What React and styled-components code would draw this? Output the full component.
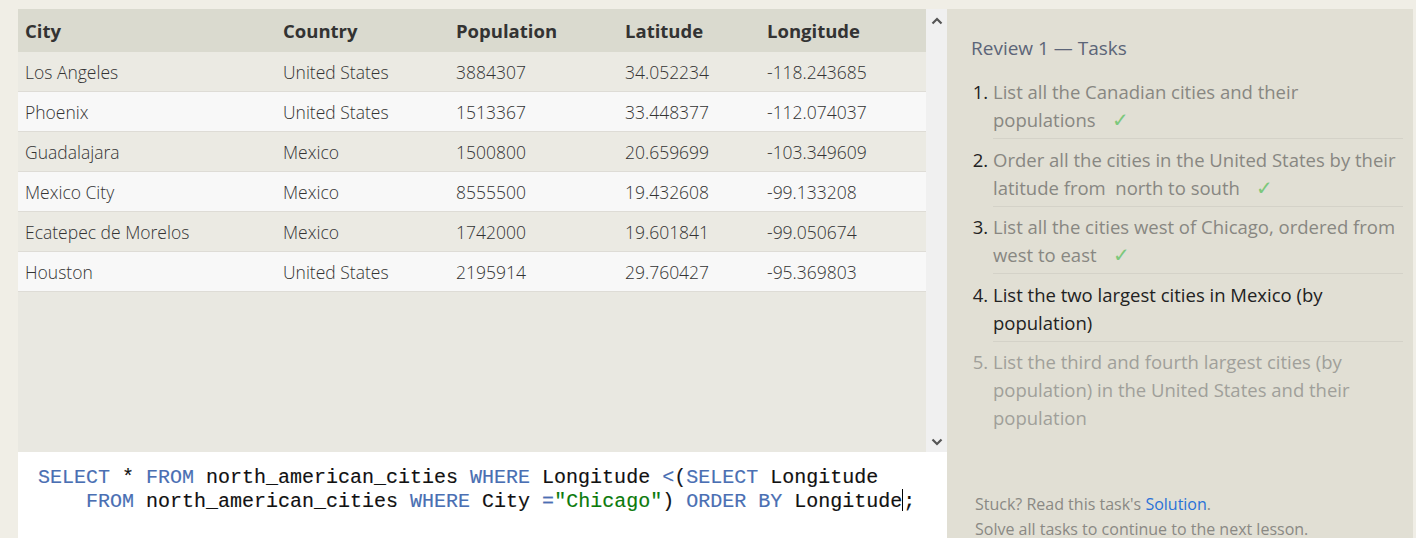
import React from 'react'
import styled, { createGlobalStyle } from 'styled-components'

const GlobalStyle = createGlobalStyle`
    html, body {
        margin: 0;
        padding: 0;
        background: #f0eee6;
        overflow: hidden;
    }
`

const Page = styled.div`
    display: flex;
    height: 538px;
    padding: 9px 3px 0 18px;
    box-sizing: border-box;
    font-family: 'Open Sans', 'Liberation Sans', sans-serif;
`

const LeftPane = styled.div`
    width: 929px;
    display: flex;
    flex-direction: column;
`

const ResultArea = styled.div`
    display: flex;
    height: 443px;
    background: #e9e8e1;
`

const TableWrap = styled.div`
    flex: 1;
`

const Table = styled.table`
    width: 100%;
    table-layout: fixed;
    border-collapse: collapse;
    color: #333;
    font-size: 17.5px;
`

const HeadCell = styled.th`
    text-align: left;
    font-weight: 700;
    font-size: 18.5px;
    height: 43px;
    padding: 0 7px;
    background: #dadacf;
    width: ${p => p.w}px;
    box-sizing: border-box;
`

const Row = styled.tr`
    background: ${p => (p.even ? '#f8f8f8' : '#ebeae3')};
    border-bottom: 1px solid #dedcd6;
`

const Cell = styled.td`
    height: 39px;
    padding: 0 7px;
    font-weight: 300;
    white-space: nowrap;
`

const Scrollbar = styled.div`
    width: 21px;
    background: #f0f0f0;
    display: flex;
    flex-direction: column;
    justify-content: space-between;
    align-items: center;
    padding: 8px 0 6px;
    box-sizing: border-box;
`

const Editor = styled.div`
    flex: 1;
    background: #fff;
    padding: 14px 20px 10px;
    font-family: 'Liberation Mono', 'DejaVu Sans Mono', monospace;
    font-size: 20px;
    line-height: 24px;
    color: #111;
    white-space: pre;
    -webkit-text-stroke: 0.15px currentColor;
`

const Kw = styled.span`
    color: #4a6fb3;
`

const Str = styled.span`
    color: #0b7a0b;
`

const Caret = styled.span`
    display: inline-block;
    width: 0;
    height: 22px;
    border-left: 1.5px solid #000;
    vertical-align: middle;
    margin-top: -3px;
`

const RightPane = styled.div`
    flex: 1;
    background: #e1dfd4;
    padding: 24px 10px 0 24px;
    display: flex;
    flex-direction: column;
`

const Title = styled.div`
    font-size: 19px;
    color: #5c6578;
    margin: 2px 0 15px;
`

const TaskList = styled.ol`
    margin: 0;
    padding-left: 22px;
    font-size: 18.5px;
    line-height: 28px;
`

const Task = styled.li`
    padding: 2px 0 4px;
    border-bottom: ${p => (p.last ? 'none' : '1px solid #d4d2c8')};
    margin-bottom: 4.5px;
    color: ${p => (p.state === 'done' ? '#888782' : p.state === 'current' ? '#222' : '#a09f9a')};
    &::marker {
        color: ${p => (p.state === 'future' ? '#a09f9a' : '#222')};
    }
`

const Check = styled.span`
    color: #7cc87c;
    margin-left: 16px;
    font-family: 'DejaVu Sans', sans-serif;
    font-size: 20px;
    font-weight: 300;
    line-height: 1;
`

const Footer = styled.div`
    margin-top: auto;
    padding-left: 4px;
    font-size: 16px;
    line-height: 25px;
    color: #8a8984;
    margin-bottom: -4px;
`

const Link = styled.span`
    color: #2a72d8;
`

const Chevron = ({ up }) => (
    <svg width="12" height="8" viewBox="0 0 12 8">
        <path d={up ? 'M1.5 6.5 L6 2 L10.5 6.5' : 'M1.5 1.5 L6 6 L10.5 1.5'} fill="none" stroke="#555" strokeWidth="2.2" />
    </svg>
)

const columns = [
    { name: 'City', w: 258 },
    { name: 'Country', w: 173 },
    { name: 'Population', w: 169 },
    { name: 'Latitude', w: 142 },
    { name: 'Longitude', w: 166 },
]

const rows = [
    ['Los Angeles', 'United States', '3884307', '34.052234', '-118.243685'],
    ['Phoenix', 'United States', '1513367', '33.448377', '-112.074037'],
    ['Guadalajara', 'Mexico', '1500800', '20.659699', '-103.349609'],
    ['Mexico City', 'Mexico', '8555500', '19.432608', '-99.133208'],
    ['Ecatepec de Morelos', 'Mexico', '1742000', '19.601841', '-99.050674'],
    ['Houston', 'United States', '2195914', '29.760427', '-95.369803'],
]

const tasks = [
    { text: 'List all the Canadian cities and their populations', state: 'done' },
    { text: 'Order all the cities in the United States by their latitude from\u00a0 north to south', state: 'done' },
    { text: 'List all the cities west of Chicago, ordered from west to east', state: 'done' },
    { text: 'List the two largest cities in Mexico (by population)', state: 'current' },
    { text: 'List the third and fourth largest cities (by population) in the United States and their population', state: 'future' },
]

const App = () => (
    <Page>
        <GlobalStyle />
        <LeftPane>
            <ResultArea>
                <TableWrap>
                    <Table>
                        <thead>
                            <tr>
                                {columns.map(c => (
                                    <HeadCell key={c.name} w={c.w}>{c.name}</HeadCell>
                                ))}
                            </tr>
                        </thead>
                        <tbody>
                            {rows.map((r, i) => (
                                <Row key={r[0]} even={i % 2 === 1}>
                                    {r.map((v, j) => (
                                        <Cell key={j}>{v}</Cell>
                                    ))}
                                </Row>
                            ))}
                        </tbody>
                    </Table>
                </TableWrap>
                <Scrollbar>
                    <Chevron up />
                    <Chevron />
                </Scrollbar>
            </ResultArea>
            <Editor>
                <Kw>SELECT</Kw> * <Kw>FROM</Kw> north_american_cities <Kw>WHERE</Kw> Longitude <Kw>&lt;</Kw>(<Kw>SELECT</Kw> Longitude{'\n'}
                {'    '}<Kw>FROM</Kw> north_american_cities <Kw>WHERE</Kw> City <Kw>=</Kw><Str>"Chicago"</Str>) <Kw>ORDER BY</Kw> Longitude<Caret />;
            </Editor>
        </LeftPane>
        <RightPane>
            <Title>Review 1 — Tasks</Title>
            <TaskList>
                {tasks.map((t, i) => (
                    <Task key={i} state={t.state} last={i === tasks.length - 1}>
                        {t.text}
                        {t.state === 'done' && <Check>✓</Check>}
                    </Task>
                ))}
            </TaskList>
            <Footer>
                Stuck? Read this task's <Link>Solution</Link>.<br />
                Solve all tasks to continue to the next lesson.
            </Footer>
        </RightPane>
    </Page>
)

export default App
